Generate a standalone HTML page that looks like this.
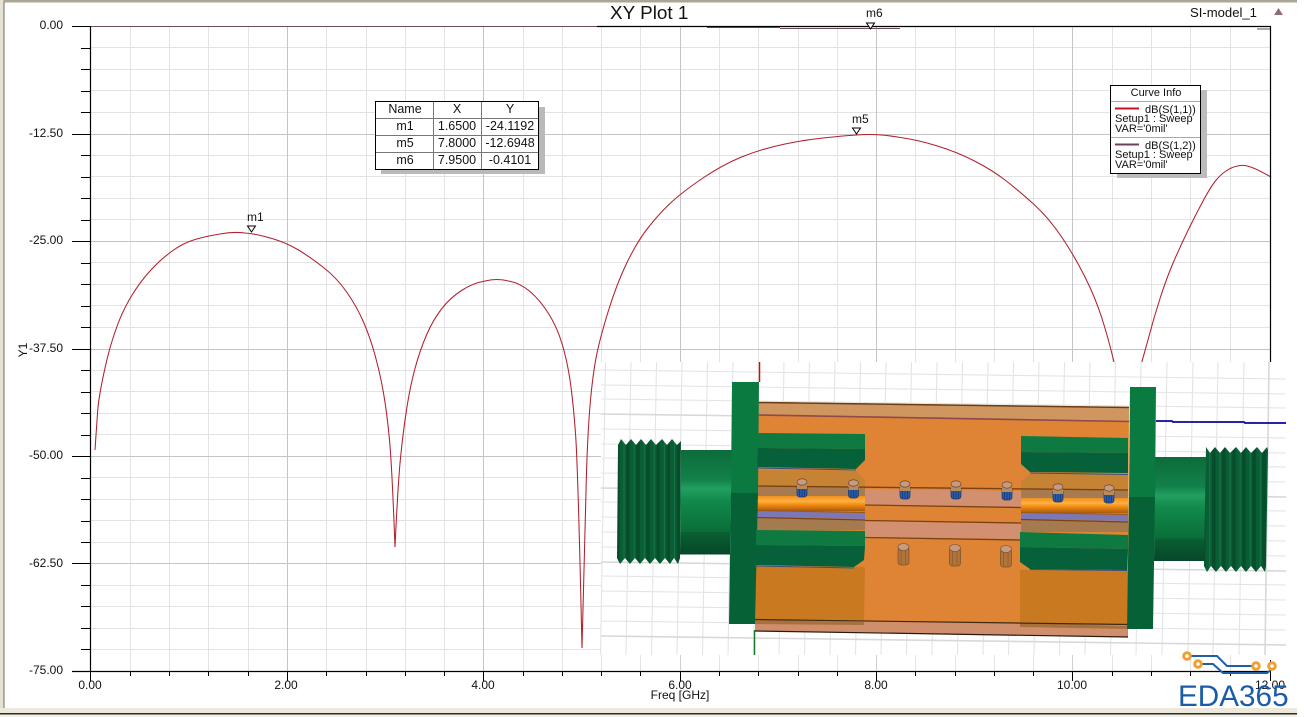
<!DOCTYPE html>
<html><head><meta charset="utf-8"><title>XY Plot 1</title>
<style>
html,body{margin:0;padding:0;background:#fff;width:1304px;height:717px;overflow:hidden}
svg{display:block;position:absolute;left:0;top:0}
text{font-family:"Liberation Sans",sans-serif;font-size:12px;fill:#111}
</style></head><body>
<svg width="1304" height="717" viewBox="0 0 1304 717" xmlns="http://www.w3.org/2000/svg">
<defs>
<linearGradient id="bar1" x1="0" y1="0" x2="0" y2="1"><stop offset="0" stop-color="#0c6c39"/><stop offset=".28" stop-color="#12804a"/><stop offset=".37" stop-color="#22a060"/><stop offset=".48" stop-color="#128a4c"/><stop offset=".78" stop-color="#0a6e38"/><stop offset=".79" stop-color="#095f32"/><stop offset="1" stop-color="#05472a"/></linearGradient>
<linearGradient id="cyl" x1="0" y1="0" x2="0" y2="1"><stop offset="0" stop-color="#f09020"/><stop offset=".35" stop-color="#ffb040"/><stop offset=".6" stop-color="#f08a10"/><stop offset="1" stop-color="#a85a10"/></linearGradient>
<pattern id="thr" width="10.100" height="10" patternUnits="userSpaceOnUse"><rect width="10.100" height="10" fill="#0a5e36"/><rect x="0" width="3.500" height="10" fill="#074c2b"/><rect x="7.500" width=".8" height="10" fill="#1a7a4c"/></pattern>
<g id="via"><rect x="-5" y="3" width="10" height="13" rx="3" fill="#2a5aa8" stroke="#1c3560" stroke-width=".7"/><path d="M-2.500 6V15M0 6V16M2.500 6V15" stroke="#16386e" stroke-width=".7"/><rect x="-5" y="1" width="10" height="7" fill="#b98a5a"/><ellipse cx="0" cy="1" rx="5" ry="3.200" fill="#c89a7e" stroke="#5a3c28" stroke-width=".6"/></g>
<g id="via2"><rect x="-5.500" y="0" width="11" height="18" rx="3" fill="#b0733a" stroke="#7a5028" stroke-width=".7"/><path d="M-2.500 3V17M2 3V17" stroke="#8c5c2c" stroke-width=".7"/><ellipse cx="0" cy="0" rx="5.500" ry="3.500" fill="#c89a7e" stroke="#6a4a30" stroke-width=".6"/></g>
</defs>

<!-- window frame -->
<rect x="0" y="0" width="1297" height="2.500" fill="#a9a693"/>
<rect x="0" y="0" width="3.300" height="708" fill="#e6e2d3"/>
<rect x="3.300" y="2" width="1.300" height="706" fill="#8a8878"/>
<rect x="0" y="708" width="1297" height="5" fill="#ece9dc"/>
<rect x="0" y="713" width="1297" height="1.500" fill="#2a2a22"/>
<rect x="0" y="714.500" width="1297" height="3" fill="#f3f1e8"/>

<!-- minor grid -->
<path fill="none" stroke="#e3e3e3" stroke-width="1" d="M130.500 26V671M169.500 26V671M208.500 26V671M248.500 26V671M326.500 26V671M366.500 26V671M405.500 26V671M444.500 26V671M523.500 26V671M562.500 26V671M601.500 26V671M640.500 26V671M719.500 26V671M758.500 26V671M798.500 26V671M837.500 26V671M915.500 26V671M955.500 26V671M994.500 26V671M1033.500 26V671M1112.500 26V671M1151.500 26V671M1190.500 26V671M1230.500 26V671
M90 47.500H1270M90 69.500H1270M90 90.500H1270M90 112.500H1270M90 155.500H1270M90 176.500H1270M90 198.500H1270M90 219.500H1270M90 262.500H1270M90 284.500H1270M90 305.500H1270M90 327.500H1270M90 370.500H1270M90 391.500H1270M90 413.500H1270M90 434.500H1270M90 477.500H1270M90 499.500H1270M90 520.500H1270M90 542.500H1270M90 585.500H1270M90 606.500H1270M90 628.500H1270M90 649.500H1270"/>
<!-- major grid -->
<path fill="none" stroke="#c4c4c4" stroke-width="1" d="M287.500 26V671M483.500 26V671M680.500 26V671M876.500 26V671M1072.500 26V671M90 134.500H1270M90 241.500H1270M90 349.500H1270M90 456.500H1270M90 563.500H1270"/>

<!-- S11 curve -->
<g fill="none" stroke="#b0202c" stroke-width="1.050">
<path d="M95 450L96 435Q97 420 97.750 410Q98.500 400 101.750 383.500Q105 367 108.500 353.500Q112 340 117.500 325Q123 310 131.500 296Q140 282 150 271Q160 260 171.500 251.500Q183 243 195 239.500Q207 236 220 234Q233 231.500 245 233Q257 234 272 238.500Q287 243 298.500 250Q310 257 323.500 267.500Q337 278 347 292.500Q357 307 363.500 322Q370 337 375 355Q380 373 383.500 393Q387 413 389.500 440Q392 467 395 547"/>
<path d="M395 547Q398 483 400.500 458Q403 433 406.500 410Q410 387 415 368.500Q420 350 426.500 335Q433 320 441.500 309Q450 298 461.500 290.500Q473 283 485 281Q497 278 508.500 281Q520 283 530 291.500Q540 300 548.500 313.500Q557 327 562 343.500Q567 360 570 380Q573 400 575.500 433.500Q578 467 582 648"/>
<path d="M582 648Q585 517 586.500 472Q588 427 590.500 400Q593 373 596.500 355.500Q600 338 608.500 310.500Q617 283 627 262.500Q637 242 647.500 228.500Q658 215 669.500 204Q681 193 701.500 179Q722 165 741.500 157Q761 149 785 144Q809 139 833 137Q857 134.500 870 134.500Q883 134.500 900.500 137.500Q918 140 937.500 146Q957 152 974.500 161Q992 170 1005 180Q1018 190 1033.500 204Q1049 218 1062 237.500Q1075 257 1085 277Q1095 297 1101.500 317Q1108 337 1114 362"/>
<path d="M1139 372Q1143 358 1148.500 338Q1154 317 1160.500 297Q1167 277 1173.500 262Q1180 247 1187.500 231.500Q1195 216 1202.500 202Q1210 188 1215 181.500Q1220 175 1226 171Q1232 167 1237.500 166Q1243 164.500 1249 166.500Q1255 168 1271 177"/>
</g>

<!-- S12 at top -->
<path fill="none" stroke="#6e4a5a" stroke-width="1" d="M90 26.500H597M707 27.500H780M780 28.500H900M1257 29H1270"/>

<!-- axes -->
<path fill="none" stroke="#000" stroke-width="1.200" d="M597 26.500H1270.500M90.500 26V671M1270.500 26V372M72 671.500H1270.500"/>
<path fill="none" stroke="#000" stroke-width="1" d="M72 26.500H90M81 48.500H90M81 69.500H90M81 91.500H90M81 112.500H90M72 134.500H90M81 155.500H90M81 177.500H90M81 198.500H90M81 220.500H90M72 241.500H90M81 263.500H90M81 284.500H90M81 306.500H90M81 327.500H90M72 349.500H90M81 370.500H90M81 392.500H90M81 413.500H90M81 435.500H90M72 456.500H90M81 478.500H90M81 499.500H90M81 521.500H90M81 542.500H90M72 563.500H90M81 585.500H90M81 606.500H90M81 628.500H90M81 649.500H90
M90.500 671V681M130.500 671V676M169.500 671V676M208.500 671V676M248.500 671V676M287.500 671V681M326.500 671V676M366.500 671V676M405.500 671V676M444.500 671V676M483.500 671V681M523.500 671V676M562.500 671V676M601.500 671V676M640.500 671V676M680.500 671V681M719.500 671V676M758.500 671V676M798.500 671V676M837.500 671V676M876.500 671V681M915.500 671V676M955.500 671V676M994.500 671V676M1033.500 671V676M1072.500 671V681M1112.500 671V676M1151.500 671V676M1190.500 671V676M1230.500 671V676M1270.500 660V681"/>

<!-- y labels -->
<g text-anchor="end">
<text x="63" y="29">0.00</text><text x="63" y="137">-12.50</text><text x="63" y="244">-25.00</text><text x="63" y="352">-37.50</text><text x="63" y="459">-50.00</text><text x="63" y="567">-62.50</text><text x="63" y="674">-75.00</text>
</g>
<text transform="translate(27,350) rotate(-90)" text-anchor="middle">Y1</text>
<!-- x labels -->
<g text-anchor="middle">
<text x="90" y="689">0.00</text><text x="286" y="689">2.00</text><text x="483" y="689">4.00</text><text x="680" y="689">6.00</text><text x="876" y="689">8.00</text><text x="1072" y="689">10.00</text><text x="1270" y="689">12.00</text>
<text x="680" y="699">Freq [GHz]</text>
</g>

<!-- title -->
<text x="610" y="19" style="font-size:18.900px">XY Plot 1</text>
<text x="1190" y="17" style="font-size:13.100px">SI-model_1</text>
<path d="M1274 15L1278.500 8L1283 15Z" fill="#a06a72"/><path d="M1278.500 9V15" stroke="#70707a" stroke-width="1"/>

<!-- markers -->
<text x="866" y="17">m6</text><path d="M866.500 23H874.500L870.500 29Z" fill="#fff" stroke="#000"/>
<text x="852" y="123">m5</text><path d="M852.500 128H860.500L856.500 134Z" fill="#fff" stroke="#000"/>
<text x="247" y="221">m1</text><path d="M247.500 226H255.500L251.500 232Z" fill="#fff" stroke="#000"/>

<!-- marker table -->
<rect x="381" y="107" width="164" height="67" fill="#b9b9b9"/>
<rect x="375.500" y="101.500" width="163" height="68" fill="#fff"/>
<path d="M433.500 101V169M481.500 101V169M375 118.500H539M375 135.500H539M375 152.500H539" stroke="#777" stroke-width="1" fill="none"/>
<rect x="375.500" y="101.500" width="163" height="68" fill="none" stroke="#000" stroke-width="1"/>
<g text-anchor="middle" style="font-size:12.500px">
<text x="405" y="113" style="font-size:12.500px">Name</text><text x="457" y="113" style="font-size:12.500px">X</text><text x="510" y="113" style="font-size:12.500px">Y</text>
<text x="405" y="130" style="font-size:12.500px">m1</text><text x="457" y="130" style="font-size:12.500px">1.6500</text><text x="510" y="130" style="font-size:12.500px">-24.1192</text>
<text x="405" y="147" style="font-size:12.500px">m5</text><text x="457" y="147" style="font-size:12.500px">7.8000</text><text x="510" y="147" style="font-size:12.500px">-12.6948</text>
<text x="405" y="164" style="font-size:12.500px">m6</text><text x="457" y="164" style="font-size:12.500px">7.9500</text><text x="510" y="164" style="font-size:12.500px">-0.4101</text>
</g>

<!-- curve info -->
<rect x="1117" y="90" width="90" height="88" fill="#bcbcbc"/>
<rect x="1111" y="85.500" width="89" height="88" fill="#fff"/>
<path d="M1111 101.500H1200M1111 137.500H1200" stroke="#aaa" fill="none"/>
<rect x="1110.500" y="85.500" width="90" height="88" fill="none" stroke="#000"/>
<text x="1156" y="96" text-anchor="middle" style="font-size:11px">Curve Info</text>
<path d="M1115 108.500H1139" stroke="#c01424" stroke-width="2"/>
<text x="1145" y="113" style="font-size:11px">dB(S(1,1))</text>
<text x="1115" y="122" style="font-size:11px">Setup1 : Sweep</text>
<text x="1115" y="132" style="font-size:11px">VAR='0mil'</text>
<path d="M1115 144.500H1139" stroke="#6e4060" stroke-width="2"/>
<text x="1145" y="149" style="font-size:11px">dB(S(1,2))</text>
<text x="1115" y="158" style="font-size:11px">Setup1 : Sweep</text>
<text x="1115" y="168" style="font-size:11px">VAR='0mil'</text>

<!-- overlay image -->
<rect x="601" y="362" width="686" height="293" fill="#fff"/>
<path fill="none" stroke="#e4e4e4" stroke-width="1.100" d="M601 370L1286 379M601 385L1286 394M601 399L1286 408M601 429L1286 438M601 444L1286 453M601 458L1286 467M601 473L1286 482M601 502L1286 511M601 517L1286 526M601 532L1286 541M601 547L1286 556M601 576L1286 585M601 591L1286 600M601 606L1286 615M601 621L1286 630
M605.500 362L600.500 655M631 362L626 655M656.500 362L651.500 655M682 362L677 655M707.500 362L702.500 655M733 362L728 655M758.500 362L753.500 655M784 362L779 655M809.500 362L804.500 655M835 362L830 655M860.500 362L855.500 655M886 362L881 655M911.500 362L906.500 655M937 362L932 655M962.500 362L957.500 655M988 362L983 655M1013.500 362L1008.500 655M1039 362L1034 655M1064.500 362L1059.500 655M1090 362L1085 655M1115.500 362L1110.500 655M1141 362L1136 655M1167 362L1162 655M1193 362L1188 655M1218 362L1213 655M1244 362L1239 655"/>
<path fill="none" stroke="#d8d8d8" stroke-width="1.600" d="M601 414L1286 423M601 488L1286 497M601 562L1286 571M601 636L1286 645M1269 362L1265 655"/>
<path fill="none" stroke="#d0d0d0" d="M680.500 655V671M876.500 655V671M1072.500 655V671"/>

<!-- wires -->
<path d="M759.500 362V382" stroke="#c81010" stroke-width="1.500"/>
<path d="M754.500 630V655" stroke="#1a7a30" stroke-width="1.500"/>
<path d="M1156 421H1172L1173 422H1244L1245 423H1286" stroke="#0a0a9a" stroke-width="1.800" fill="none"/>

<!-- left connector -->
<polygon points="681,450 732,450 730,554.500 680,554.500" fill="url(#bar1)"/>
<polygon points="618,445 621,439 626,445 631,439 636,445 641,439 646,445 651,439 656,445 662,439 667,445 672,439 677,445 681,441 680,558 678,564 674,558 670,564 665,558 660,564 655,558 650,564 645,558 640,564 635,558 630,564 625,558 620,564 617,558" fill="url(#thr)"/>

<!-- right connector -->
<polygon points="1155,457 1206,457 1205,561 1154,561" fill="url(#bar1)"/>
<polygon points="1206,447 1210,453 1215,447 1220,453 1225,447 1230,453 1236,447 1241,453 1246,447 1251,453 1257,447 1262,453 1267,447 1268,450 1266,566 1265,572 1261,566 1256,572 1251,566 1246,572 1241,566 1236,572 1231,566 1226,572 1221,566 1216,572 1211,566 1207,572 1204,566" fill="url(#thr)"/>

<!-- body -->
<polygon points="758,402 1129,407 1128,637 755,631" fill="#df8434"/>
<polygon points="758,402 1129,407 1129,421 758,415" fill="#cf9660"/>
<path d="M758 402.500L1129 407.500" stroke="#6b3c14" stroke-width="1.500"/>
<path d="M758 415L1129 421.500" stroke="#8c4a4c" stroke-width="1.600"/>
<!-- bottom darker blocks -->
<polygon points="756,566 865,567 864,620 755,619" fill="#c9791f"/>
<polygon points="1020,570 1128,571 1127,624 1020,622" fill="#c9791f"/>
<polygon points="755,620 1128,625 1127,637 755,631" fill="#cf8e6c"/>
<polygon points="755,620 864,622 864,625 755,624" fill="#a8703c"/>
<polygon points="1020,623 1128,626 1128,629 1020,627" fill="#a8703c"/>
<path d="M755 619.500L1128 624.500" stroke="#3c2a14" stroke-width="1.200"/>
<path d="M755 631L1128 637" stroke="#2a1a10" stroke-width="1.200"/>
<!-- left/right center layers -->
<polygon points="757,470 856,471 865,480 865,497 757,496" fill="#c68334"/>
<polygon points="757,486 865,488 865,497 757,496" fill="#a77a4f"/>
<polygon points="1030,473 1128,474 1128,497 1021,497 1021,482" fill="#c68334"/>
<polygon points="1021,489 1128,490 1128,499 1021,498" fill="#a77a4f"/>
<!-- pink center bands -->
<polygon points="865,489 1021,491 1021,507 865,505" fill="#d29071"/>
<polygon points="865,521 1021,523 1021,539 865,537" fill="#d29071"/>
<path d="M757 486L1128 490" stroke="#7a4210" stroke-width="1.300"/>
<path d="M865 505L1021 507.500M865 520.500L1021 523M865 537.500L1021 540" stroke="#7a4210" stroke-width="1.300"/>
<!-- orange cylinders -->
<rect x="757" y="496" width="108" height="15" fill="url(#cyl)"/>
<rect x="1021" y="498" width="107" height="15" fill="url(#cyl)"/>
<polygon points="757,511 865,513 865,519 757,517" fill="#7c78b8"/>
<polygon points="1021,513 1128,515 1128,521 1021,519" fill="#7c78b8"/>
<polygon points="757,518 865,520 865,530 757,530" fill="#a67a4f"/>
<polygon points="1021,520 1128,522 1128,532 1021,532" fill="#a67a4f"/>
<path d="M757 517.500L865 520M1021 519.500L1128 522" stroke="#7a4210" stroke-width="1.200"/>
<path d="M757 510.500L865 512.500M1021 512.500L1128 514.500" stroke="#a05a18" stroke-width="1.200"/>

<!-- flanges -->
<polygon points="732,382 759,382 758,493 731,493" fill="#0b7a40"/>
<polygon points="731,493 758,493 755,624 729,624" fill="#066236"/>
<polygon points="1130,387 1156,387 1155,497 1129,497" fill="#0b7a40"/>
<polygon points="1129,497 1155,497 1153,629 1127,629" fill="#066236"/>

<!-- green blocks -->
<polygon points="758,433 865,434 865,449 758,448" fill="#0e7a42"/>
<polygon points="758,448 865,449 865,460 856,469 757,467" fill="#06603a"/>
<polygon points="1021,436 1128,438 1128,453 1021,452" fill="#0e7a42"/>
<polygon points="1021,452 1128,453 1128,473 1030,472 1021,464" fill="#06603a"/>
<polygon points="756,530 865,531 865,546 756,545" fill="#0e7a42"/>
<polygon points="756,545 865,546 864,560 854,567 755,565" fill="#06603a"/>
<polygon points="1020,532 1128,535 1128,549 1020,547" fill="#0e7a42"/>
<polygon points="1020,547 1128,549 1127,570 1030,569 1020,562" fill="#06603a"/>
<path d="M757 468L856 470M1030 473L1128 474.500M755 566L854 568M1030 569.500L1127 570.500" stroke="#3a5080" stroke-width="1"/>

<!-- vias -->
<use href="#via" x="802" y="481"/><use href="#via" x="853.500" y="482"/><use href="#via" x="905" y="483"/><use href="#via" x="956" y="483"/><use href="#via" x="1007" y="484"/><use href="#via" x="1058" y="486"/><use href="#via" x="1109" y="487"/>
<use href="#via2" x="903.500" y="547"/><use href="#via2" x="955" y="548"/><use href="#via2" x="1006" y="549"/>

<!-- EDA365 logo -->
<path fill="none" stroke="#1f5fa5" stroke-width="2" d="M1191 656H1217L1227 666H1252M1202 664H1213L1223 673H1267L1272 669"/>
<g fill="#fff" stroke="#eea030" stroke-width="3">
<circle cx="1187" cy="656" r="3.300"/><circle cx="1198" cy="664" r="3.300"/><circle cx="1256" cy="666" r="3.300"/><circle cx="1272" cy="666" r="3.300"/>
</g>
<text x="1178" y="706" style="font-size:29.700px;fill:#1b5ca8">EDA365</text>
</svg>
</body></html>
